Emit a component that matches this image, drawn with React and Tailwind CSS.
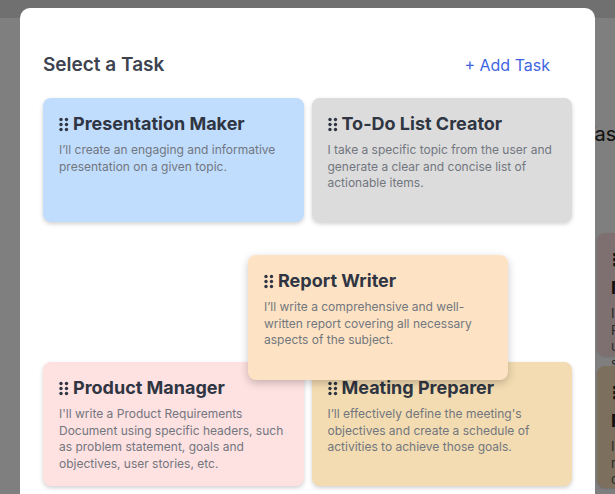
import React from 'react';

const tasks = [
  {
    id: 'presentation',
    title: 'Presentation Maker',
    text: 'I’ll create an engaging and informative presentation on a given topic.',
    bg: 'bg-[#c0ddfd]',
  },
  {
    id: 'todo',
    title: 'To-Do List Creator',
    text: 'I take a specific topic from the user and generate a clear and concise list of actionable items.',
    bg: 'bg-[#dcdcdc]',
  },
  { id: 'slot-1', empty: true },
  { id: 'slot-2', empty: true },
  {
    id: 'product',
    title: 'Product Manager',
    text: "I'll write a Product Requirements Document using specific headers, such as problem statement, goals and objectives, user stories, etc.",
    bg: 'bg-[#fee1e1]',
  },
  {
    id: 'meeting',
    title: 'Meating Preparer',
    text: 'I’ll effectively define the meeting\'s objectives and create a schedule of activities to achieve those goals.',
    bg: 'bg-[#f3dcb1]',
  },
];

function Grip() {
  return (
    <svg width="10" height="15" viewBox="0 0 10 15" className="shrink-0 text-[#2f3542]" fill="currentColor">
      <circle cx="2" cy="2.5" r="1.7" />
      <circle cx="7.5" cy="2.5" r="1.7" />
      <circle cx="2" cy="7.5" r="1.7" />
      <circle cx="7.5" cy="7.5" r="1.7" />
      <circle cx="2" cy="12.5" r="1.7" />
      <circle cx="7.5" cy="12.5" r="1.7" />
    </svg>
  );
}

function TaskCard({ task, className = '' }) {
  return (
    <div className={`${task.bg} rounded-lg px-4 pt-[14px] shadow-[0_2px_4px_rgba(0,0,0,0.18)] ${className}`}>
      <div className="flex items-center gap-1">
        <Grip />
        <h3 className="text-[18px] leading-6 font-bold text-[#2f3542]">{task.title}</h3>
      </div>
      <p className="mt-[6px] text-[12px] leading-[16.5px] text-[#72767f]">{task.text}</p>
    </div>
  );
}

export default function App() {
  return (
    <div className="relative w-[615px] h-[494px] overflow-hidden bg-white" style={{ fontFamily: 'Inter, "Noto Sans", sans-serif' }}>
      {/* page behind the dialog */}
      <div className="h-[18px] bg-[#e0e0e0]" />
      <div className="flex">
        <div className="w-[583px] shrink-0" />
        <div className="w-[200px] shrink-0">
          <h2 className="mt-[102px] text-[20px] leading-7 text-[#222]">Tasks</h2>
          <div className="ml-[14px] mt-[85px] flex flex-col gap-[10px]">
            <div className="h-[123px] rounded-lg bg-[#fde0e0] px-[14px] pt-[14px] shadow">
              <div className="text-[18px] font-bold text-[#222]">⠿ Product Manager</div>
              <p className="mt-1 text-[13px] leading-[16.5px] text-[#555]">I'll write a Product Requirements Document using specific headers, such as problem statement</p>
            </div>
            <div className="h-[122px] rounded-lg bg-[#f8dfbb] px-[14px] pt-[14px] shadow">
              <div className="text-[18px] font-bold text-[#222]">⠿ Meating Preparer</div>
              <p className="mt-1 text-[13px] leading-[16.5px] text-[#555]">I'll effectively define the meeting's objectives and create a schedule</p>
            </div>
          </div>
        </div>
      </div>

      {/* overlay + dialog */}
      <div className="absolute inset-0 bg-black/50 flex justify-center pt-2">
        <div className="relative w-[575px] h-[560px] bg-white rounded-[10px] px-[23px]">
          <div className="flex items-center justify-between pt-[43px] pb-[19px]">
            <h2 className="text-[19px] leading-7 font-semibold text-[#3d4350]">Select a Task</h2>
            <button className="px-[22px] text-[16px] leading-6 text-[#3f66e0]">+ Add Task</button>
          </div>
          <div className="grid grid-cols-2 gap-2 auto-rows-[124px]">
            {tasks.map((t) => (t.empty ? <div key={t.id} /> : <TaskCard key={t.id} task={t} />))}
          </div>
          <TaskCard
            className="absolute left-[228px] top-[247px] w-[260px] h-[125px] shadow-[0_3px_8px_rgba(0,0,0,0.22)]"
            task={{
              title: 'Report Writer',
              text: 'I’ll write a comprehensive and well-written report covering all necessary aspects of the subject.',
              bg: 'bg-[#fde3c3]',
            }}
          />
        </div>
      </div>
    </div>
  );
}
